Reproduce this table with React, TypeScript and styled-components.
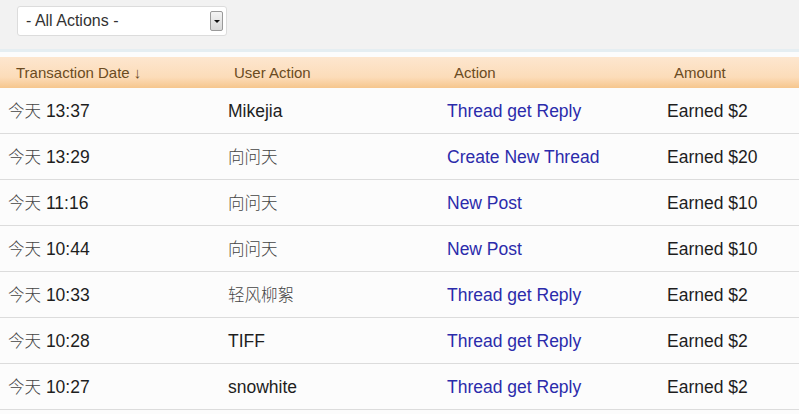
import React from "react";
import styled, { createGlobalStyle } from "styled-components";

const Global = createGlobalStyle`
  html, body { margin: 0; padding: 0; background: #fcfcfc; }
  body { font-family: "Liberation Sans", Arial, "Noto Sans CJK SC", sans-serif; }
`;

const Page = styled.div`
  width: 799px;
  height: 414px;
  overflow: hidden;
  background: #fcfcfc;
`;

const Toolbar = styled.div`
  height: 52px;
  background: #f2f2f2;
  padding: 6px 0 0 17px;
  box-sizing: border-box;
  border-bottom: 3px solid #e5eef2;
`;

const Select = styled.div`
  width: 210px;
  height: 30px;
  box-sizing: border-box;
  background: #fff;
  border: 1px solid #dcdcdc;
  border-radius: 3px;
  display: flex;
  align-items: center;
  justify-content: space-between;
  padding: 0 3px 0 8px;
  font-size: 16px;
  color: #333;
`;

const DropButton = styled.div`
  width: 13px;
  height: 20px;
  box-sizing: border-box;
  border: 1px solid #9a9a9a;
  border-radius: 2px;
  background: linear-gradient(#f4f4f4, #d8d8d8);
  display: flex;
  align-items: center;
  justify-content: center;
  &::after {
    content: "";
    border-left: 3px solid transparent;
    border-right: 3px solid transparent;
    border-top: 3px solid #111;
  }
`;

const Spacer = styled.div`
  height: 5px;
  background: #fcfcfc;
`;

const Table = styled.div`
  display: flex;
  flex-direction: column;
`;

const HeaderRow = styled.div`
  display: grid;
  grid-template-columns: 218px 220px 220px 1fr;
  height: 31px;
  align-items: center;
  padding-left: 16px;
  background: linear-gradient(#fde6cf, #fcdcb9 65%, #f6c68d);
  color: #6b4b22;
  font-size: 15px;
  line-height: 18px;
`;

const Row = styled.div`
  display: grid;
  grid-template-columns: 220px 219px 220px 1fr;
  height: 45px;
  align-items: center;
  padding-left: 8px;
  border-bottom: 1px solid #dcdcdc;
  font-size: 17.5px;
  line-height: 20px;
  color: #1e1e1e;
`;

const Cell = styled.span`
  display: block;
  height: 20px;
  white-space: nowrap;
`;

const Cjk = styled.span`
  font-family: "Noto Sans CJK SC", sans-serif;
  font-weight: 300;
  font-size: 16.5px;
  line-height: 0;
  color: #444;
`;

const Link = styled.a`
  color: #2b2bab;
  text-decoration: none;
`;

const rows = [
  ["13:37", "Mikejia", "Thread get Reply", "Earned $2"],
  ["13:29", "向问天", "Create New Thread", "Earned $20"],
  ["11:16", "向问天", "New Post", "Earned $10"],
  ["10:44", "向问天", "New Post", "Earned $10"],
  ["10:33", "轻风柳絮", "Thread get Reply", "Earned $2"],
  ["10:28", "TIFF", "Thread get Reply", "Earned $2"],
  ["10:27", "snowhite", "Thread get Reply", "Earned $2"],
];

const isCjk = (s: string) => /[\u4e00-\u9fff]/.test(s);

export default function App() {
  return (
    <Page>
      <Global />
      <Toolbar>
        <Select>
          <span>- All Actions -</span>
          <DropButton />
        </Select>
      </Toolbar>
      <Spacer />
      <Table>
        <HeaderRow>
          <span>Transaction Date ↓</span>
          <span>User Action</span>
          <span>Action</span>
          <span>Amount</span>
        </HeaderRow>
        {rows.map((r, i) => (
          <Row key={i}>
            <Cell>
              <Cjk>今天</Cjk> {r[0]}
            </Cell>
            <Cell>{isCjk(r[1]) ? <Cjk>{r[1]}</Cjk> : r[1]}</Cell>
            <Cell>
              <Link href="#">{r[2]}</Link>
            </Cell>
            <Cell>{r[3]}</Cell>
          </Row>
        ))}
      </Table>
    </Page>
  );
}
